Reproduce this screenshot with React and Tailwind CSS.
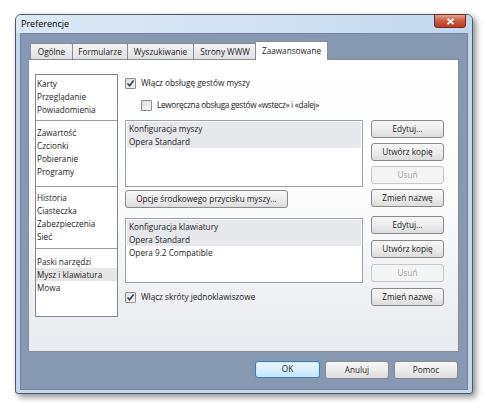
import React from 'react';

const tabs = ['Ogólne', 'Formularze', 'Wyszukiwanie', 'Strony WWW'];
const tabWidths = ['w-[43px]', 'w-[56px]', 'w-[67px]', 'w-[64px]'];

const groups = [
  { items: ['Karty', 'Przeglądanie', 'Powiadomienia'], pad: 'pt-[2px] pb-[4px]' },
  { items: ['Zawartość', 'Czcionki', 'Pobieranie', 'Programy'], pad: 'pt-[5px] pb-[8px] border-t border-[#a0a0a0]' },
  { items: ['Historia', 'Ciasteczka', 'Zabezpieczenia', 'Sieć'], pad: 'pt-[4px] pb-[5px] border-t border-[#a0a0a0]' },
  { items: ['Paski narzędzi', 'Mysz i klawiatura', 'Mowa'], pad: 'pt-[6px] border-t border-[#a0a0a0]' },
];

const Checkbox = ({ checked }) => (
  <span className="w-[11px] h-[11px] shrink-0 border border-[#8e8f8f] rounded-[1px] bg-gradient-to-br from-[#dcdcdc] to-[#fbfbfb] flex items-center justify-center">
    {checked && (
      <svg width="9" height="9" viewBox="0 0 9 9">
        <path d="M1.5 4.5 L3.6 6.8 L7.6 1.6" fill="none" stroke="#333d55" strokeWidth="1.6" />
      </svg>
    )}
  </span>
);

const Button = ({ children, disabled, className = '' }) => (
  <div
    className={`h-[18px] flex items-center justify-center rounded-[3px] border ${
      disabled
        ? 'border-[#c5c9cc] bg-[#f4f4f4] text-[#a3a3a3]'
        : 'border-[#8a8a8a] bg-gradient-to-b from-[#f7f7f7] via-[#ededed] to-[#dcdcdc] text-[#1b1b1b]'
    } ${className}`}
  >
    {children}
  </div>
);

const ConfigList = ({ header, rows, height }) => (
  <div className={`${height} border border-[#9da3ab] bg-white pt-px px-px`}>
    <div className="h-[13px] leading-[13px] bg-[#e6e8eb] pl-[2px]">{header}</div>
    {rows.map((r, i) => (
      <div key={r} className={`h-[13px] leading-[13px] pl-[2px] ${i === 0 ? 'bg-[#e6e8eb]' : ''}`}>
        {r}
      </div>
    ))}
  </div>
);

const ButtonStack = ({ gap }) => (
  <div className={`flex flex-col ${gap}`}>
    <Button>Edytuj...</Button>
    <Button>Utwórz kopię</Button>
    <Button disabled>Usuń</Button>
    <Button>Zmień nazwę</Button>
  </div>
);

export default function App() {
  return (
    <div className="w-[490px] h-[410px] bg-white pt-[14px] pl-[15px] text-[8.2px] text-[#1b1b1b] font-['Segoe_UI','Open_Sans',sans-serif]">
      <div className="w-[458px] h-[380px] flex flex-col rounded-t-[6px] rounded-b-[3px] border border-[#4f5a68] bg-[#c3d8ee] shadow-[3px_3px_6px_rgba(0,0,0,0.45)]">
        {/* title bar */}
        <div className="h-[18px] flex items-start justify-between rounded-t-[5px] bg-gradient-to-r from-[#dce8f5] via-[#d2e2f3] to-[#c2d7ee]">
          <span className="pl-[5px] pt-[4px] text-[9px] leading-[10px] text-black">Preferencje</span>
          <div className="-mt-px mr-[6px] w-[32px] h-[14px] rounded-b-[3px] border border-[#6b2a22] bg-gradient-to-b from-[#e3a08e] via-[#c95b44] to-[#b93a22] flex items-center justify-center">
            <svg width="9" height="7" viewBox="0 0 9 7">
              <path d="M1.5 0.8 L7.5 6.2 M7.5 0.8 L1.5 6.2" stroke="white" strokeWidth="1.8" />
            </svg>
          </div>
        </div>

        {/* client */}
        <div className="flex-1 mx-[4px] mb-[3px] bg-[#8798b3] border border-[#7486a2] flex flex-col">
          {/* tabs */}
          <div className="pt-[8px] pl-[9px] flex items-end h-[26px]">
            {tabs.map((t, i) => (
              <div
                key={t}
                className={`${tabWidths[i]} h-[17px] -mr-px flex items-center justify-center border border-b-0 border-[#898c95] rounded-t-[2px] bg-gradient-to-b from-[#f4f4f4] to-[#dedfe1]`}
              >
                {t}
              </div>
            ))}
            <div className="w-[73px] h-[19px] -ml-px relative z-10 flex items-center justify-center border border-b-0 border-[#898c95] rounded-t-[2px] bg-white">
              Zaawansowane
            </div>
          </div>

          {/* panel */}
          <div className="ml-[7px] w-[431px] h-[293px] border border-[#898c95] -mt-px bg-gradient-to-b from-white via-[#fbfbfc] to-[#e7eaee] flex pl-[6px] pt-[14px]">
            {/* category list */}
            <div className="w-[83px] h-[243px] border border-[#828790] bg-white flex flex-col">
              {groups.map((g, gi) => (
                <div key={gi} className={g.pad}>
                  {g.items.map((it) => (
                    <div
                      key={it}
                      className={`h-[13px] leading-[13px] pl-px ${it === 'Mysz i klawiatura' ? 'bg-[#e6e6e6]' : ''}`}
                    >
                      {it}
                    </div>
                  ))}
                </div>
              ))}
            </div>

            {/* main settings */}
            <div className="ml-[7px] w-[238px] flex flex-col">
              <div className="mt-[3px] h-[13px] flex items-center gap-[5px]">
                <Checkbox checked />
                <span>Włącz obsługę gestów myszy</span>
              </div>
              <div className="mt-[9px] h-[13px] pl-[16px] flex items-center gap-[5px]">
                <Checkbox />
                <span className="tracking-[-0.3px]">Leworęczna obsługa gestów «wstecz» i «dalej»</span>
              </div>
              <div className="mt-[8px]">
                <ConfigList header="Konfiguracja myszy" rows={['Opera Standard']} height="h-[67px]" />
              </div>
              <Button className="mt-[3px] w-[163px] h-[17px]">Opcje środkowego przycisku myszy...</Button>
              <div className="mt-[10px]">
                <ConfigList
                  header="Konfiguracja klawiatury"
                  rows={['Opera Standard', 'Opera 9.2 Compatible']}
                  height="h-[65px]"
                />
              </div>
              <div className="mt-[8px] h-[13px] flex items-center gap-[5px]">
                <Checkbox checked />
                <span>Włącz skróty jednoklawiszowe</span>
              </div>
            </div>

            {/* side buttons */}
            <div className="ml-[8px] w-[73px] pt-[46px] flex flex-col">
              <ButtonStack gap="gap-[5px]" />
              <div className="mt-[9px]">
                <ButtonStack gap="gap-[6px]" />
              </div>
            </div>
          </div>

          {/* dialog buttons */}
          <div className="mt-[9px] pr-[9px] flex justify-end gap-[5px]">
            <div className="w-[65px] h-[17px] flex items-center justify-center rounded-[3px] border border-[#3c7fb1] bg-gradient-to-b from-[#eaf6fd] via-[#d9effc] to-[#bee6fd] shadow-[inset_0_0_0_1px_#cfe9fb]">
              OK
            </div>
            <Button className="w-[64px] h-[17px]">Anuluj</Button>
            <Button className="w-[64px] h-[17px]">Pomoc</Button>
          </div>
        </div>
      </div>
    </div>
  );
}
